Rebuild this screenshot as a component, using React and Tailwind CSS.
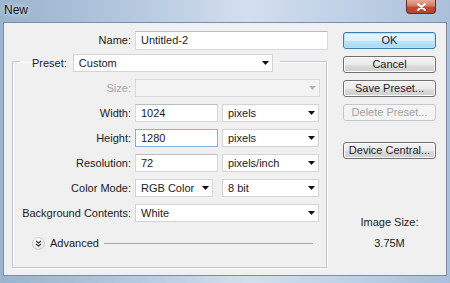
import React from "react";

function Arrow({ disabled }) {
  return (
    <svg width="7" height="4" viewBox="0 0 7 4" className="shrink-0">
      <path d="M0 0h7L3.5 4z" fill={disabled ? "#b4b4b4" : "#111111"} />
    </svg>
  );
}

function Select({ value, className = "", disabled = false }) {
  return (
    <div
      className={
        "flex items-center justify-between h-[18px] border pl-[5px] pr-[3px] " +
        (disabled ? "border-[#dadada] bg-[#f4f4f4] " : "border-[#d3d3d3] bg-white ") +
        className
      }
    >
      <span className="leading-none">{value}</span>
      <Arrow disabled={disabled} />
    </div>
  );
}

function Input({ value, className = "", focused = false }) {
  return (
    <div
      className={
        "flex items-center h-[18px] border bg-white pl-[5px] " +
        (focused ? "border-[#84b3e0] " : "border-[#d6d9dd] border-t-[#b9bcc2] ") +
        className
      }
    >
      <span className="leading-none">{value}</span>
    </div>
  );
}

function Button({ children, variant = "normal", className = "" }) {
  const base =
    "flex items-center justify-center w-[93px] h-[17px] rounded-[3px] border leading-none ";
  if (variant === "default")
    return (
      <div
        className={
          base +
          "border-[#3c7fb1] bg-[linear-gradient(#eaf6fd_0%,#d9f0fc_50%,#bee6fd_51%,#a7d9f5_100%)] shadow-[inset_0_0_0_1px_#b8e0f8] " +
          className
        }
      >
        {children}
      </div>
    );
  if (variant === "disabled")
    return (
      <div
        className={
          base + "border-[#c6c9cc] bg-[#f4f4f4] text-[#a3a3a3] " + className
        }
      >
        {children}
      </div>
    );
  return (
    <div
      className={
        base +
        "border-[#707070] bg-[linear-gradient(#f2f2f2_0%,#ebebeb_50%,#dddddd_51%,#cfcfcf_100%)] shadow-[inset_0_0_0_1px_#fcfcfc] " +
        className
      }
    >
      {children}
    </div>
  );
}

function Row({ label, children, disabled = false }) {
  return (
    <div className="flex items-center h-[18px] gap-[4px]">
      <div
        className={
          "w-[111px] text-right leading-none " + (disabled ? "text-[#a6a6a6]" : "")
        }
      >
        {label}
      </div>
      {children}
    </div>
  );
}

export default function App() {
  return (
    <div className="w-[450px] h-[283px] overflow-hidden flex flex-col bg-[linear-gradient(90deg,#9bb3cd_0%,#b5c9df_30%,#d2dfee_55%,#bccfe4_80%,#a9c0da_100%)] font-['Liberation_Sans',Arial,sans-serif] text-[11px] text-[#1b1b1b]">
      {/* Title bar */}
      <div className="h-[22px] flex items-start justify-between pl-[4px] pr-[14px]">
        <div className="mt-[4px] text-[12px] text-[#151515] leading-none [text-shadow:0_0_6px_#ffffff]">
          New
        </div>
        <div className="w-[30px] h-[14px] rounded-b-[4px] border border-t-0 border-[#6b2a22] bg-[linear-gradient(#e8a898_0%,#d77a66_45%,#c04a32_55%,#b5452f_100%)] flex items-center justify-center">
          <svg width="9" height="8" viewBox="0 0 9 8">
            <path d="M1 1l7 6M8 1L1 7" stroke="#ffffff" strokeWidth="2" strokeLinecap="round" />
          </svg>
        </div>
      </div>

      {/* Client area */}
      <div className="mx-[3px] h-[254px] border border-[#7d8ea5] bg-[#f0f0f0] flex">
        {/* Left column */}
        <div className="w-[324px] flex flex-col pt-[8px]">
          <div className="flex items-center gap-[4px]">
            <div className="w-[127px] text-right leading-none">Name:</div>
            <Input value="Untitled-2" className="w-[193px] !h-[19px]" />
          </div>

          <fieldset className="ml-[8px] w-[315px] border border-[#c2c6ca] shadow-[inset_1px_1px_0_#ffffff,1px_1px_0_#ffffff] pl-[7px] pb-[17px]">
            <legend className="pt-[4px] pl-[12px] pr-[7px]">
              <div className="flex items-center gap-[6px]">
                <span className="leading-none">Preset:</span>
                <Select value="Custom" className="w-[200px]" />
              </div>
            </legend>

            <div className="flex flex-col gap-[7px] pt-[7px]">
              <Row label="Size:" disabled>
                <Select value="" disabled className="w-[185px]" />
              </Row>
              <Row label="Width:">
                <Input value="1024" className="w-[83px]" />
                <Select value="pixels" className="w-[97px]" />
              </Row>
              <Row label="Height:">
                <Input value="1280" focused className="w-[83px]" />
                <Select value="pixels" className="w-[97px]" />
              </Row>
              <Row label="Resolution:">
                <Input value="72" className="w-[83px]" />
                <Select value="pixels/inch" className="w-[97px]" />
              </Row>
              <Row label="Color Mode:">
                <Select value="RGB Color" className="w-[78px]" />
                <Select value="8 bit" className="w-[97px] ml-[5px]" />
              </Row>
              <Row label="Background Contents:">
                <Select value="White" className="w-[184px]" />
              </Row>
            </div>

            <div className="flex items-center h-[14px] mt-[14px] pl-[12px]">
              <div className="w-[13px] h-[13px] rounded-full border border-[#c9c9c9] bg-[linear-gradient(#ffffff,#e4e4e4)] flex items-center justify-center">
                <svg width="7" height="7" viewBox="0 0 7 7">
                  <path d="M1 1l2.5 2 2.5-2M1 4l2.5 2 2.5-2" stroke="#333" strokeWidth="1.1" fill="none" />
                </svg>
              </div>
              <span className="ml-[5px] leading-none">Advanced</span>
              <div className="flex-1 ml-[5px] mr-[13px] h-px bg-[#a9a9a9]" />
            </div>
          </fieldset>
        </div>

        {/* Right column */}
        <div className="ml-[15px] w-[93px] flex flex-col pt-[9px]">
          <div className="flex flex-col gap-[7px]">
            <Button variant="default">OK</Button>
            <Button>Cancel</Button>
            <Button>Save Preset...</Button>
            <Button variant="disabled">Delete Preset...</Button>
          </div>
          <Button className="mt-[21px]">Device Central...</Button>
          <div className="mt-[57px] text-center leading-[13px]">Image Size:</div>
          <div className="mt-[8px] text-center leading-[13px]">3.75M</div>
        </div>
      </div>
    </div>
  );
}
